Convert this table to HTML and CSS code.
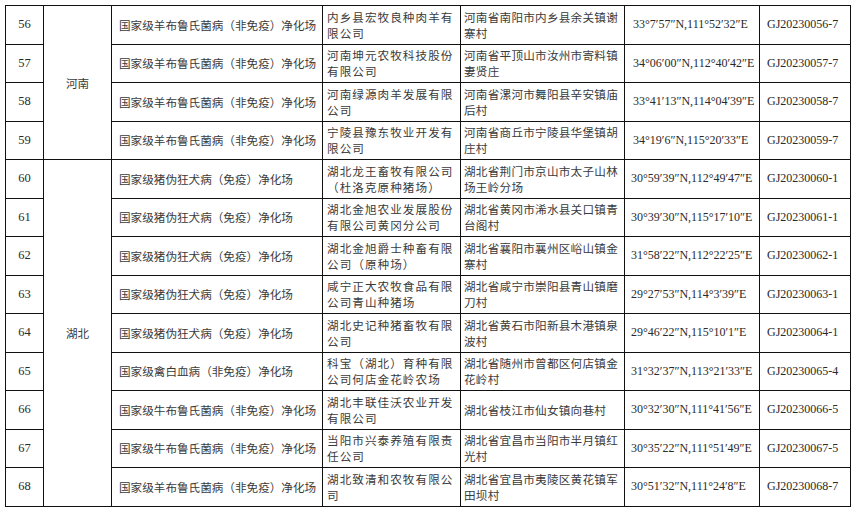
FILE: index.html
```html
<!DOCTYPE html>
<html lang="zh">
<head>
<meta charset="utf-8">
<link rel="stylesheet" href="styles.css">
</head>
<body>
<table class="sheet">
<colgroup>
<col class="c-no"><col class="c-prov"><col class="c-type"><col class="c-co"><col class="c-addr"><col class="c-geo"><col class="c-code">
</colgroup>
<tbody>
<tr><td class="no">56</td><td class="prov" rowspan="4">河南</td><td class="type">国家级羊布鲁氏菌病（非免疫）净化场</td><td class="co">内乡县宏牧良种肉羊有<br>限公司</td><td class="addr">河南省南阳市内乡县余关镇谢<br>寨村</td><td class="geo g1">33°7′57″N,111°52′32″E</td><td class="code">GJ20230056-7</td></tr>
<tr><td class="no">57</td><td class="type">国家级羊布鲁氏菌病（非免疫）净化场</td><td class="co">河南坤元农牧科技股份<br>有限公司</td><td class="addr">河南省平顶山市汝州市寄料镇<br>妻贤庄</td><td class="geo g1">34°06′00″N,112°40′42″E</td><td class="code">GJ20230057-7</td></tr>
<tr><td class="no">58</td><td class="type">国家级羊布鲁氏菌病（非免疫）净化场</td><td class="co">河南绿源肉羊发展有限<br>公司</td><td class="addr">河南省漯河市舞阳县辛安镇庙<br>后村</td><td class="geo g1">33°41′13″N,114°04′39″E</td><td class="code">GJ20230058-7</td></tr>
<tr><td class="no">59</td><td class="type">国家级羊布鲁氏菌病（非免疫）净化场</td><td class="co">宁陵县豫东牧业开发有<br>限公司</td><td class="addr">河南省商丘市宁陵县华堡镇胡<br>庄村</td><td class="geo g1">34°19′6″N,115°20′33″E</td><td class="code">GJ20230059-7</td></tr>
<tr><td class="no">60</td><td class="prov" rowspan="9">湖北</td><td class="type">国家级猪伪狂犬病（免疫）净化场</td><td class="co">湖北龙王畜牧有限公司<br>（杜洛克原种猪场）</td><td class="addr">湖北省荆门市京山市太子山林<br>场王岭分场</td><td class="geo">30°59′39″N,112°49′47″E</td><td class="code">GJ20230060-1</td></tr>
<tr><td class="no">61</td><td class="type">国家级猪伪狂犬病（免疫）净化场</td><td class="co">湖北金旭农业发展股份<br>有限公司黄冈分公司</td><td class="addr">湖北省黄冈市浠水县关口镇青<br>台阁村</td><td class="geo">30°39′30″N,115°17′10″E</td><td class="code">GJ20230061-1</td></tr>
<tr><td class="no">62</td><td class="type">国家级猪伪狂犬病（免疫）净化场</td><td class="co">湖北金旭爵士种畜有限<br>公司（原种场）</td><td class="addr">湖北省襄阳市襄州区峪山镇金<br>寨村</td><td class="geo">31°58′22″N,112°22′25″E</td><td class="code">GJ20230062-1</td></tr>
<tr><td class="no">63</td><td class="type">国家级猪伪狂犬病（免疫）净化场</td><td class="co">咸宁正大农牧食品有限<br>公司青山种猪场</td><td class="addr">湖北省咸宁市崇阳县青山镇磨<br>刀村</td><td class="geo">29°27′53″N,114°3′39″E</td><td class="code">GJ20230063-1</td></tr>
<tr><td class="no">64</td><td class="type">国家级猪伪狂犬病（免疫）净化场</td><td class="co">湖北史记种猪畜牧有限<br>公司</td><td class="addr">湖北省黄石市阳新县木港镇泉<br>波村</td><td class="geo">29°46′22″N,115°10′1″E</td><td class="code">GJ20230064-1</td></tr>
<tr><td class="no">65</td><td class="type">国家级禽白血病（非免疫）净化场</td><td class="co">科宝（湖北）育种有限<br>公司何店金花岭农场</td><td class="addr">湖北省随州市曾都区何店镇金<br>花岭村</td><td class="geo">31°32′37″N,113°21′33″E</td><td class="code">GJ20230065-4</td></tr>
<tr><td class="no">66</td><td class="type">国家级牛布鲁氏菌病（非免疫）净化场</td><td class="co">湖北丰联佳沃农业开发<br>有限公司</td><td class="addr">湖北省枝江市仙女镇向巷村</td><td class="geo">30°32′30″N,111°41′56″E</td><td class="code">GJ20230066-5</td></tr>
<tr><td class="no">67</td><td class="type">国家级牛布鲁氏菌病（非免疫）净化场</td><td class="co">当阳市兴泰养殖有限责<br>任公司</td><td class="addr">湖北省宜昌市当阳市半月镇红<br>光村</td><td class="geo">30°35′22″N,111°51′49″E</td><td class="code">GJ20230067-5</td></tr>
<tr><td class="no">68</td><td class="type">国家级羊布鲁氏菌病（非免疫）净化场</td><td class="co">湖北致清和农牧有限公<br>司</td><td class="addr">湖北省宜昌市夷陵区黄花镇军<br>田坝村</td><td class="geo">30°51′32″N,111°24′8″E</td><td class="code">GJ20230068-7</td></tr>
</tbody>
</table>
</body>
</html>
```
FILE: styles.css
```css
html, body {
  margin: 0;
  padding: 0;
  background: #fff;
}
body {
  padding: 5px 0 0 5px;
}
.sheet {
  border-collapse: collapse;
  table-layout: fixed;
  width: 846px;
  color: #2a2a2a;
  font-family: "Liberation Serif", "Noto Sans CJK SC", serif;
  font-size: 12px;
}
.c-no { width: 38px; }
.c-prov { width: 68px; }
.c-type { width: 211px; }
.c-co { width: 138px; }
.c-addr { width: 164px; }
.c-geo { width: 135px; }
.c-code { width: 91px; }
.sheet tr {
  height: 38.5px;
}
.sheet td {
  border: 1px solid #111;
  padding: 0;
  vertical-align: middle;
  white-space: nowrap;
  overflow: hidden;
}
.sheet td.no {
  text-align: center;
  font-size: 12.5px;
}
.sheet td.prov,
.sheet td.type,
.sheet td.co,
.sheet td.addr {
  font-family: "Noto Sans CJK SC", sans-serif;
  font-size: 11.6px;
  font-weight: 400;
  color: #3a3a3a;
}
.sheet td.prov {
  text-align: center;
}
.sheet td.type {
  padding-left: 7px;
}
.sheet td.co {
  padding-left: 4px;
  letter-spacing: 1.05px;
  line-height: 16px;
}
.sheet td.addr {
  padding-left: 3px;
  letter-spacing: 0.25px;
  line-height: 16px;
}
.sheet td.geo {
  padding-left: 6px;
}
.sheet td.geo.g1 {
  padding-left: 8px;
}
.sheet td.code {
  padding-left: 7px;
}
```
